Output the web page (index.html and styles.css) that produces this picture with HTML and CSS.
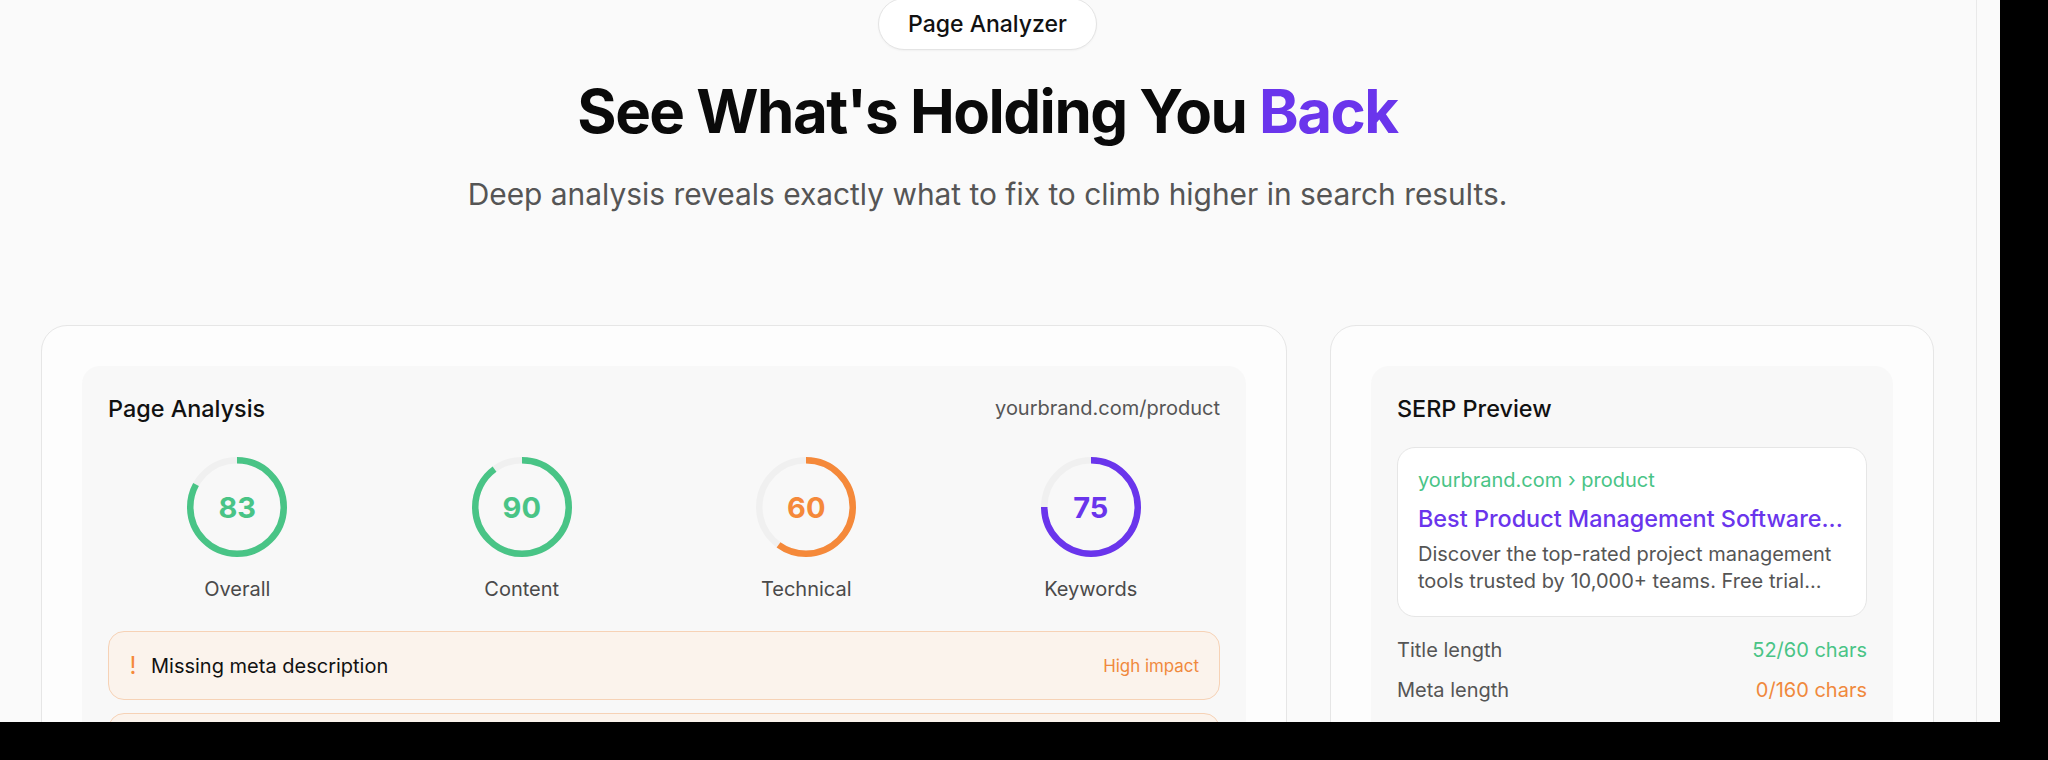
FILE: index.html
```html
<!DOCTYPE html>
<html lang="en">
  <head>
    <meta charset="UTF-8" />
    <meta name="viewport" content="width=device-width, initial-scale=1.0" />
    <title>Page Analyzer</title>
    <link rel="stylesheet" href="styles.css">
  </head>
  <body>
    <div class="frame">
      <main class="page">
        <section class="hero">
          <span class="badge">Page Analyzer</span>
          <h1>See What's Holding You <span class="accent">Back</span></h1>
          <p class="lead">Deep analysis reveals exactly what to fix to climb higher in search results.</p>
        </section>

        <section class="cards">
          <div class="card">
            <div class="panel">
              <div class="panel-head">
                <h3>Page Analysis</h3>
                <span class="url">yourbrand.com/product</span>
              </div>

              <div class="scores">
                <div class="score">
                  <div class="ring green">
                    <svg width="100" height="100" viewBox="0 0 100 100">
                      <circle class="track" cx="50" cy="50" r="46.75" />
                      <circle class="bar" cx="50" cy="50" r="46.75" pathLength="100" stroke-dasharray="83 100" />
                    </svg>
                    <span class="num">83</span>
                  </div>
                  <p>Overall</p>
                </div>
                <div class="score">
                  <div class="ring green">
                    <svg width="100" height="100" viewBox="0 0 100 100">
                      <circle class="track" cx="50" cy="50" r="46.75" />
                      <circle class="bar" cx="50" cy="50" r="46.75" pathLength="100" stroke-dasharray="90 100" />
                    </svg>
                    <span class="num">90</span>
                  </div>
                  <p>Content</p>
                </div>
                <div class="score">
                  <div class="ring orange">
                    <svg width="100" height="100" viewBox="0 0 100 100">
                      <circle class="track" cx="50" cy="50" r="46.75" />
                      <circle class="bar" cx="50" cy="50" r="46.75" pathLength="100" stroke-dasharray="60 100" />
                    </svg>
                    <span class="num">60</span>
                  </div>
                  <p>Technical</p>
                </div>
                <div class="score">
                  <div class="ring purple">
                    <svg width="100" height="100" viewBox="0 0 100 100">
                      <circle class="track" cx="50" cy="50" r="46.75" />
                      <circle class="bar" cx="50" cy="50" r="46.75" pathLength="100" stroke-dasharray="75 100" />
                    </svg>
                    <span class="num">75</span>
                  </div>
                  <p>Keywords</p>
                </div>
              </div>

              <div class="issues">
                <div class="issue">
                  <span class="mark">!</span>
                  <span class="issue-text">Missing meta description</span>
                  <span class="impact">High impact</span>
                </div>
                <!-- next issue starts just below the fold -->
                <div class="issue"></div>
              </div>
            </div>
          </div>

          <div class="card">
            <div class="panel">
              <div class="panel-head">
                <h3>SERP Preview</h3>
              </div>
              <div class="serp">
                <p class="serp-url">yourbrand.com › product</p>
                <p class="serp-title">Best Product Management Software...</p>
                <p class="serp-desc">Discover the top-rated project management tools trusted by 10,000+ teams. Free trial...</p>
              </div>
              <div class="stat">
                <span>Title length</span>
                <span class="good">52/60 chars</span>
              </div>
              <div class="stat">
                <span>Meta length</span>
                <span class="warn">0/160 chars</span>
              </div>
            </div>
          </div>
        </section>
      </main>
      <div class="scrollbar"></div>
    </div>
  </body>
</html>
```

FILE: styles.css
```css
* {
  box-sizing: border-box;
}
body {
  margin: 0;
  background: #000;
  font-family: Inter, "Noto Sans", sans-serif;
  color: #111;
}
h1,
h3,
p {
  margin: 0;
}
.frame {
  width: 2000px;
  height: 722px;
  overflow: hidden;
  display: flex;
  background: #fafafa;
}
.page {
  width: 1976px;
  padding: 0 42px 0 41px;
}
.scrollbar {
  width: 24px;
  border-left: 1px solid #e9e9e9;
}

/* hero */
.hero {
  text-align: center;
}
.badge {
  display: inline-block;
  margin-top: -2px;
  height: 52px;
  padding: 0 29px;
  line-height: 50px;
  font-size: 23px;
  font-weight: 500;
  background: #fff;
  border: 1px solid #e4e4e4;
  border-radius: 26px;
  box-shadow: 0 1px 2px rgba(0, 0, 0, 0.04);
}
.hero h1 {
  margin-top: 28px;
  font-size: 60px;
  line-height: 66px;
  font-weight: 700;
  letter-spacing: -1.5px;
  color: #0a0a0a;
}
.accent {
  color: #6a35ec;
}
.lead {
  margin-top: 30px;
  font-size: 29.9px;
  line-height: 40px;
  color: #555;
}

/* cards */
.cards {
  margin-top: 111px;
  display: grid;
  grid-template-columns: 1246fr 604fr;
  gap: 43px;
}
.card {
  background: #fdfdfd;
  border: 1px solid #e6e6e6;
  border-radius: 26px;
  padding: 40px;
}
.panel {
  background: #f8f8f8;
  border-radius: 18px;
  padding: 27px 26px 26px;
  height: 600px;
}
.panel-head {
  display: flex;
  justify-content: space-between;
  align-items: center;
  line-height: 31px;
}
.panel-head h3 {
  font-size: 23.4px;
  font-weight: 500;
}
.url {
  font-size: 20px;
  color: #555;
}

/* score rings */
.scores {
  margin-top: 33px;
  display: grid;
  grid-template-columns: repeat(4, 1fr);
  gap: 26px;
  text-align: center;
}
.ring {
  position: relative;
  width: 100px;
  height: 100px;
  margin: 0 auto;
}
.ring svg {
  display: block;
  transform: rotate(-90deg);
}
.ring circle {
  fill: none;
  stroke-width: 6.5;
}
.track {
  stroke: #f0f0f0;
}
.green .bar {
  stroke: #49c486;
}
.orange .bar {
  stroke: #f5893a;
}
.purple .bar {
  stroke: #6a35ec;
}
.num {
  position: absolute;
  inset: 0;
  display: flex;
  align-items: center;
  justify-content: center;
  font-size: 29px;
  font-weight: 700;
}
.green .num {
  color: #49c486;
}
.orange .num {
  color: #f5893a;
}
.purple .num {
  color: #6a35ec;
}
.score p {
  margin-top: 17px;
  font-size: 20px;
  line-height: 31px;
  color: #4a4a4a;
}

/* issues */
.issues {
  margin-top: 26px;
  display: flex;
  flex-direction: column;
  gap: 13px;
}
.issue {
  display: flex;
  align-items: center;
  height: 69px;
  padding: 0 20px;
  background: #fbf3ec;
  border: 1px solid #f6d2b6;
  border-radius: 16px;
}
.mark {
  width: 8px;
  margin-right: 14px;
  color: #f5893a;
  font-size: 24px;
  font-weight: 400;
  text-align: center;
}
.issue-text {
  flex: 1;
  font-size: 20px;
}
.impact {
  font-size: 16.9px;
  color: #f0893d;
}

/* serp preview */
.serp {
  margin-top: 23px;
  background: #fff;
  border: 1px solid #e6e6e6;
  border-radius: 18px;
  padding: 19px 20px 21px;
}
.serp-url {
  font-size: 20px;
  line-height: 27px;
  color: #49c486;
}
.serp-title {
  margin-top: 9px;
  font-size: 23.4px;
  line-height: 31px;
  font-weight: 500;
  color: #6a35ec;
}
.serp-desc {
  margin-top: 7px;
  font-size: 20px;
  line-height: 27px;
  color: #555;
}
.stat {
  display: flex;
  justify-content: space-between;
  font-size: 20px;
  line-height: 27px;
  color: #555;
  margin-top: 13px;
}
.serp + .stat {
  margin-top: 20px;
}
.good {
  color: #49c486;
}
.warn {
  color: #f0893d;
}
```
